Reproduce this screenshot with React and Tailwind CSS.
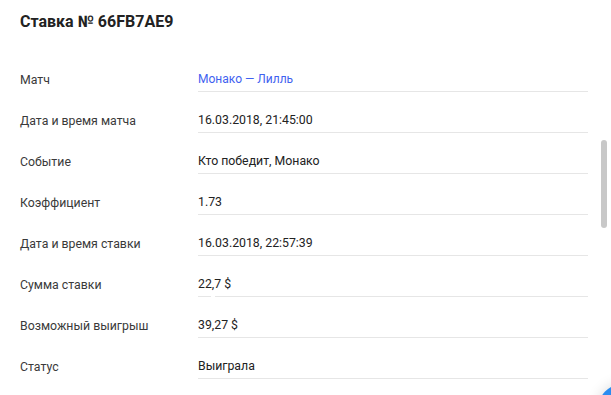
import React from "react";

const rows = [
  ["Матч", "Монако — Лилль", true],
  ["Дата и время матча", "16.03.2018, 21:45:00"],
  ["Событие", "Кто победит, Монако"],
  ["Коэффициент", "1.73"],
  ["Дата и время ставки", "16.03.2018, 22:57:39"],
  ["Сумма ставки", "22,7 $"],
  ["Возможный выигрыш", "39,27 $"],
  ["Статус", "Выиграла"],
];

export default function App() {
  return (
    <div
      className="relative w-[611px] h-[395px] overflow-hidden bg-white"
      style={{ fontFamily: "Roboto, 'Liberation Sans', sans-serif" }}
    >
      <div className="pl-[20px] pr-[23px] pt-[12px]">
        <h1 className="text-[16px] leading-[20px] font-bold text-[#222]">
          Ставка № 66FB7AE9
        </h1>
        <div className="mt-[19px] flex flex-col">
          {rows.map(([label, value, link], i) => (
            <div key={i} className="flex h-[41px]">
              <div className="w-[178px] flex items-end pb-[4px] text-[12.3px] leading-[16px] text-[#3a3a3a]">
                {label}
              </div>
              <div className="relative flex-1 flex items-end pb-[4px] border-b border-[#e6e6e6] text-[12.3px] leading-[16px]">
                <span className={link ? "text-[#3f62f0] text-[12px]" : "text-[#222]"}>{value}</span>
                {i === 5 && (
                  <span className="absolute left-[13px] bottom-[-1px] w-[4px] h-[1px] bg-white" />
                )}
              </div>
            </div>
          ))}
        </div>
      </div>
      <div className="absolute left-[601px] top-[140px] w-[6px] h-[88px] rounded-full bg-[#c8c8c8]" />
      <div className="absolute left-[598px] top-[384px] w-[50px] h-[50px] rounded-full bg-[#2a8cf0] shadow-[0_0_14px_rgba(0,0,0,0.15)]" />
    </div>
  );
}
